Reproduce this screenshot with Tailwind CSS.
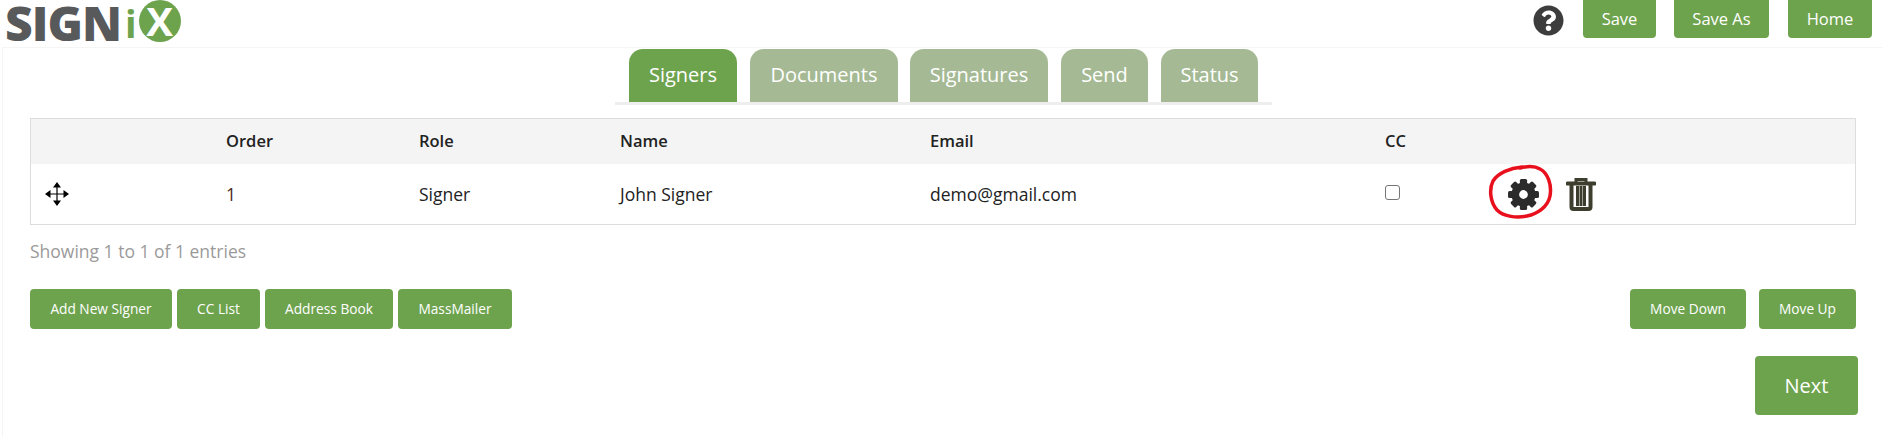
<!DOCTYPE html>
<html>
<head>
<meta charset="utf-8">
<script src="https://cdn.jsdelivr.net/npm/@tailwindcss/browser@4"></script>
</head>
<body class="bg-white font-['Open_Sans',sans-serif] overflow-hidden">
<div class="relative w-[1883px] h-[437px]">
  <header class="h-[47px] flex justify-between">
    <div class="flex items-start pl-[5px] h-[47px]">
      <span class="text-[48px] leading-[46px] font-extrabold tracking-[-1px] text-[#58595b]">SIGN</span>
      <span class="text-[38px] leading-[47px] font-bold text-[#6ea34e] ml-[4px]">i</span>
      <span class="w-[42px] h-[42px] rounded-full bg-[#6ea34e] text-white text-[40px] leading-[42px] font-bold text-center ml-[2px]">X</span>
    </div>
    <div class="flex items-start pr-[11px]">
      <svg class="w-[31px] h-[31px] mt-[5px] mr-[19px]" viewBox="0 0 512 512" fill="#3d3d3d"><path d="M504 256c0 136.997-111.043 248-248 248S8 392.997 8 256C8 119.083 119.043 8 256 8s248 111.083 248 248zM262.655 90c-54.497 0-89.255 22.957-116.549 63.758-3.536 5.286-2.353 12.415 2.715 16.258l34.699 26.31c5.205 3.947 12.621 3.008 16.665-2.122 17.864-22.658 30.113-35.797 57.303-35.797 20.429 0 45.698 13.148 45.698 32.958 0 14.976-12.363 22.667-32.534 33.976C247.128 238.528 216 254.941 216 296v4c0 6.627 5.373 12 12 12h56c6.627 0 12-5.373 12-12v-1.333c0-28.462 83.186-29.647 83.186-106.667 0-58.002-60.165-102-116.531-102zM256 338c-25.365 0-46 20.635-46 46 0 25.364 20.635 46 46 46s46-20.636 46-46c0-25.365-20.635-46-46-46z"/></svg>
      <button class="w-[73px] h-[38px] bg-[#6ea34e] text-white text-[16.500px] rounded-b-[4px]">Save</button>
      <button class="w-[95px] h-[38px] bg-[#6ea34e] text-white text-[16.500px] rounded-b-[4px] ml-[18px]">Save As</button>
      <button class="w-[84px] h-[38px] bg-[#6ea34e] text-white text-[16.500px] rounded-b-[4px] ml-[19px]">Home</button>
    </div>
  </header>
  <div class="absolute left-[2px] top-[47px] right-0 bottom-0 border-t border-l border-[#f5f5f5]"></div>
  <div class="relative h-[71px] pt-[2px]">
    <div class="ml-[615px] w-[657px] h-[56px] border-b-[3px] border-[#eeeeee] flex items-end text-[20px] text-white pl-[14px]">
      <div class="w-[108px] h-[53px] bg-[#6ea34e] rounded-t-[14px] text-center leading-[51px]">Signers</div>
      <div class="w-[148px] h-[53px] bg-[#a5ba94] rounded-t-[14px] text-center leading-[51px] ml-[13px]">Documents</div>
      <div class="w-[138px] h-[53px] bg-[#a5ba94] rounded-t-[14px] text-center leading-[51px] ml-[12px]">Signatures</div>
      <div class="w-[87px] h-[53px] bg-[#a5ba94] rounded-t-[14px] text-center leading-[51px] ml-[13px]">Send</div>
      <div class="w-[97px] h-[53px] bg-[#a5ba94] rounded-t-[14px] text-center leading-[51px] ml-[13px]">Status</div>
    </div>
  </div>
  <section class="relative ml-[30px] w-[1826px] border border-[#dddddd] h-[107px] text-[17.500px] text-[#222222]">
    <div class="grid grid-cols-[195px_193px_201px_310px_455px_1fr] h-[45px] pb-[1px] bg-[#f4f4f4] items-center font-semibold text-[16.500px]">
      <span></span><span>Order</span><span>Role</span><span>Name</span><span>Email</span><span>CC</span>
    </div>
    <div class="grid grid-cols-[195px_193px_201px_310px_455px_1fr] h-[60px] items-center">
      <span class="pl-[13px]">
        <svg class="w-[26px] h-[26px] block" viewBox="0 0 26 26" fill="#000"><path d="M12.400 5h1.200v16h-1.200zM5 12.400h16v1.200H5z"/><path d="M13 1l4 5.500H9zM13 25l-4-5.500h8zM1 13l5.500-4v8zM25 13l-5.500 4V9z"/></svg>
      </span>
      <span class="text-[#4a2a20]">1</span>
      <span>Signer</span>
      <span>John Signer</span>
      <span>demo@gmail.com</span>
      <span><span class="block w-[15px] h-[15px] border border-[#767676] rounded-[3px] bg-white -mt-[4px]"></span></span>
    </div>
  </section>
  <svg class="absolute left-[1507px] top-[178px] w-[33px] h-[33px]" viewBox="0 0 32 32" fill="#2b2b2b"><circle cx="16" cy="16" r="8" fill="none" stroke="#2b2b2b" stroke-width="7.500"/><g><rect x="12.500" y="1" width="7" height="7" rx="1.500"/><rect x="12.500" y="24" width="7" height="7" rx="1.500"/><rect x="1" y="12.500" width="7" height="7" rx="1.500"/><rect x="24" y="12.500" width="7" height="7" rx="1.500"/><rect x="12.500" y="1" width="7" height="7" rx="1.500" transform="rotate(45 16 16)"/><rect x="12.500" y="24" width="7" height="7" rx="1.500" transform="rotate(45 16 16)"/><rect x="1" y="12.500" width="7" height="7" rx="1.500" transform="rotate(45 16 16)"/><rect x="24" y="12.500" width="7" height="7" rx="1.500" transform="rotate(45 16 16)"/></g></svg>
  <svg class="absolute left-[1488px] top-[164px] w-[66px] h-[56px]" viewBox="0 0 66 56" fill="none" stroke="#e8101c" stroke-width="3.500" stroke-linecap="round"><path d="M34 3C22 4 10 9 5 17 1 25 2 38 9 46c7 7 20 8 30 6 10-2 21-9 23-20 2-11-2-23-10-27-5-3-12-3-20-1"/></svg>
  <svg class="absolute left-[1566px] top-[177px] w-[30px] h-[34px]" viewBox="0 0 30 34" fill="none" stroke="#3e3e2e"><path d="M1.500 6.500h27" stroke-width="4" stroke-linecap="round"/><path d="M10 5V2.500h10V5" stroke-width="3"/><path d="M5.500 8v22a2 2 0 0 0 2 2h15a2 2 0 0 0 2-2V8" stroke-width="4"/><path d="M11.500 9v20M18.500 9v20M15 9v20" stroke-width="3"/></svg>
  <p class="absolute left-[30px] top-[240px] text-[17.500px] leading-[22px] text-[#9a9a9a]">Showing 1 to 1 of 1 entries</p>
  <div class="absolute left-[30px] right-[27px] top-[289px] flex text-[13.700px] text-white">
    <button class="w-[142px] h-[40px] bg-[#6ea34e] rounded-[4px]">Add New Signer</button>
    <button class="w-[83px] h-[40px] bg-[#6ea34e] rounded-[4px] ml-[5px]">CC List</button>
    <button class="w-[128px] h-[40px] bg-[#6ea34e] rounded-[4px] ml-[5px]">Address Book</button>
    <button class="w-[114px] h-[40px] bg-[#6ea34e] rounded-[4px] ml-[5px]">MassMailer</button>
    <button class="w-[116px] h-[40px] bg-[#6ea34e] rounded-[4px] ml-auto">Move Down</button>
    <button class="w-[97px] h-[40px] bg-[#6ea34e] rounded-[4px] ml-[13px]">Move Up</button>
  </div>
  <button class="absolute left-[1755px] top-[356px] w-[103px] h-[59px] bg-[#6ea34e] rounded-[4px] text-white text-[20px]">Next</button>
</div>
</body>
</html>
